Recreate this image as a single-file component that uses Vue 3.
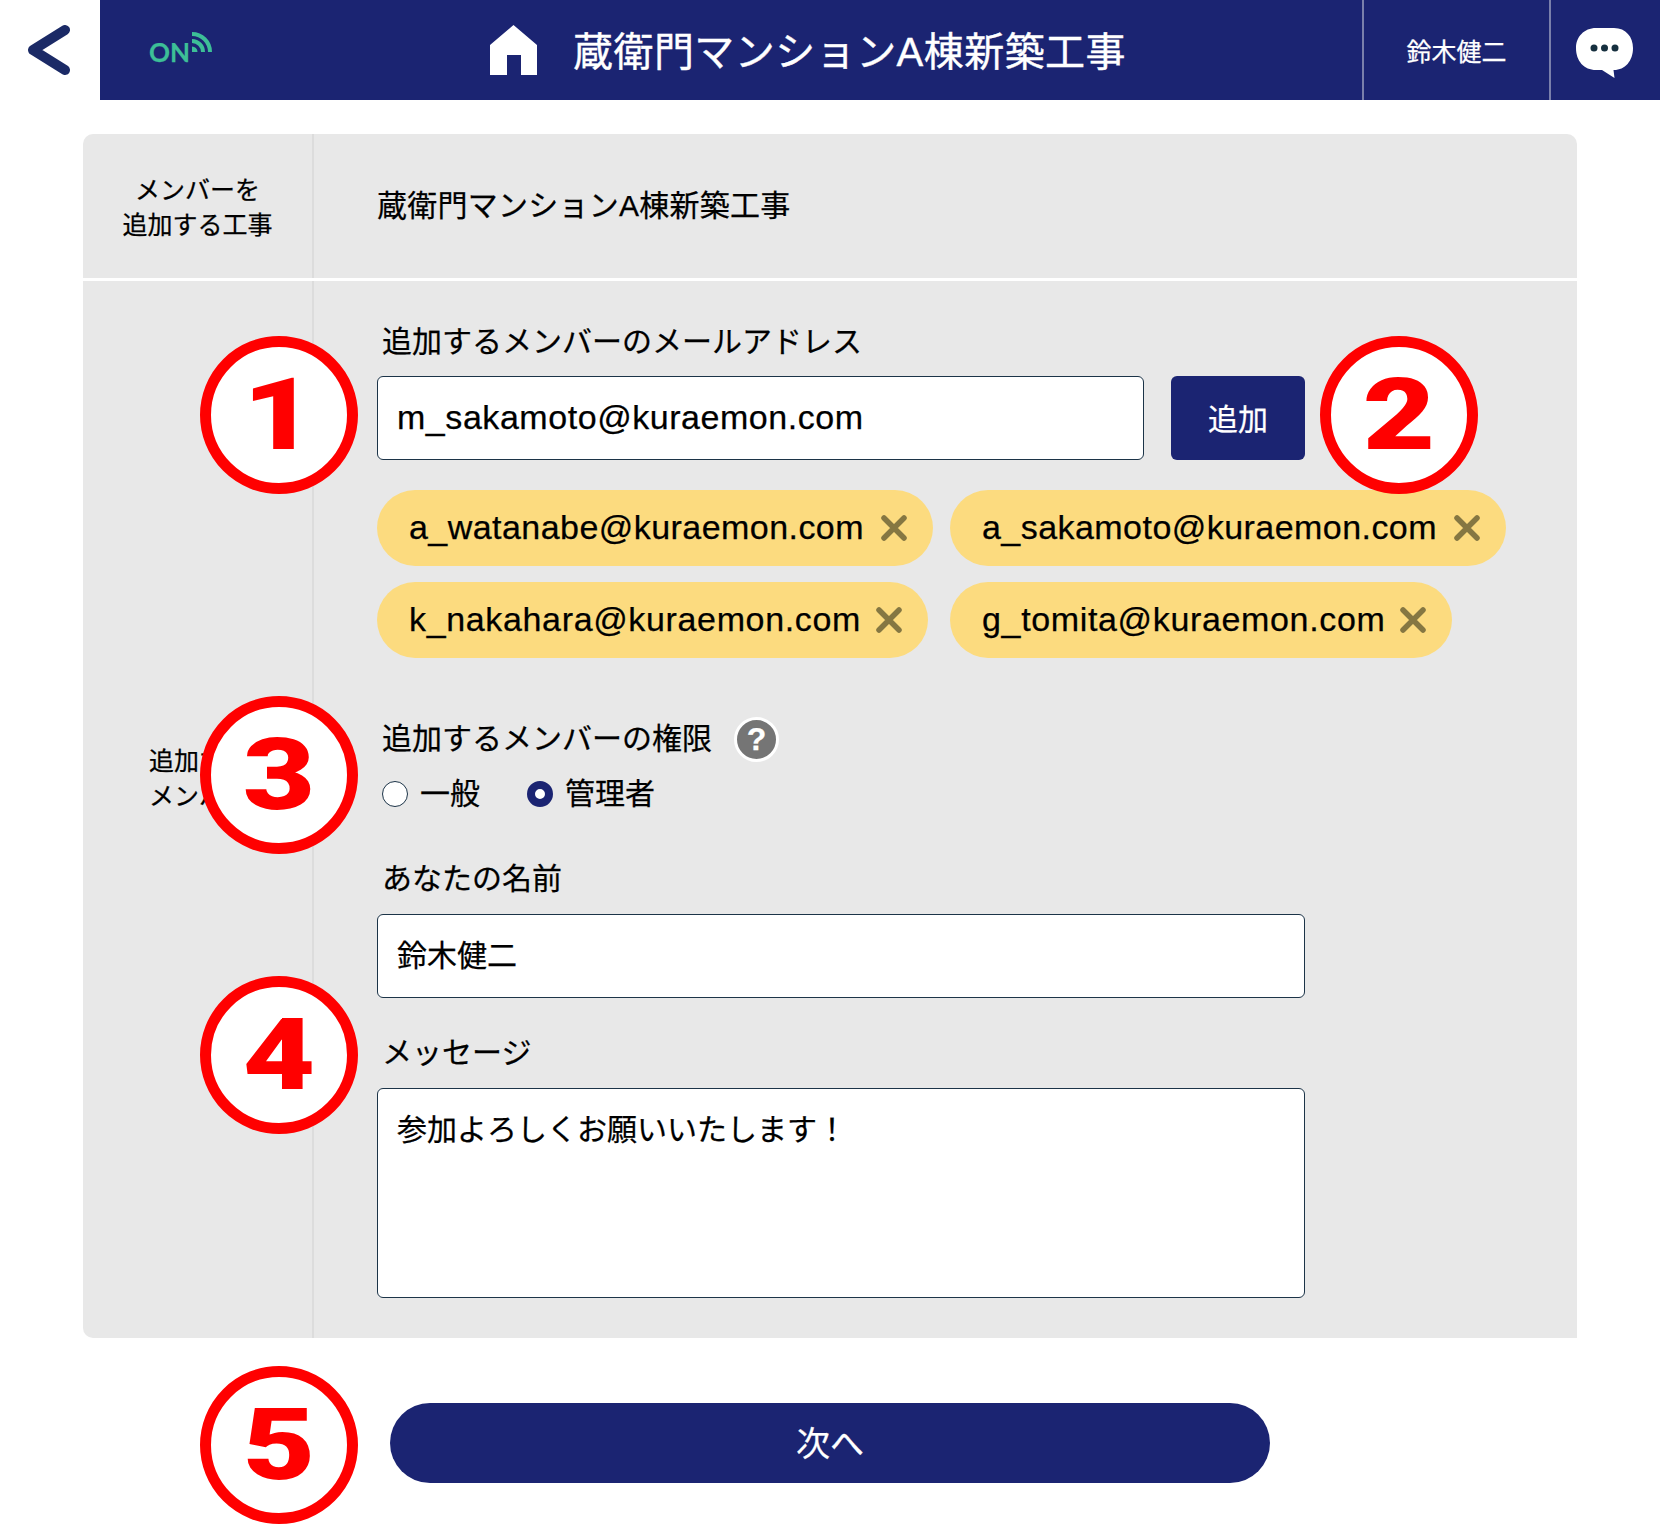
<script setup>
const chips = [
  'a_watanabe@kuraemon.com',
  'a_sakamoto@kuraemon.com',
  'k_nakahara@kuraemon.com',
  'g_tomita@kuraemon.com',
]
const marks = [
  { n: 1, cls: 'm1' },
  { n: 2, cls: 'm2' },
  { n: 3, cls: 'm3' },
  { n: 4, cls: 'm4' },
  { n: 5, cls: 'm5' },
]
</script>

<template>
  <div class="page">
    <header class="top">
      <div class="back">
        <svg width="44" height="50" viewBox="0 0 44 50"><path d="M39 5 L7 25 L39 45" fill="none" stroke="#1b2a66" stroke-width="10" stroke-linecap="round" stroke-linejoin="round"/></svg>
      </div>
      <div class="bar">
        <div class="status">
          <span class="on">ON</span>
          <svg class="wifi" width="20" height="20" viewBox="0 0 20 20" fill="none" stroke="#3dbf97" stroke-width="4">
            <path d="M0 2 A18 18 0 0 1 18 20"/>
            <path d="M0 9 A11 11 0 0 1 11 20"/>
            <path d="M0 14.500 A5.500 5.500 0 0 1 5.500 20 H0 Z" fill="#3dbf97" stroke="none"/>
          </svg>
        </div>
        <svg class="home" width="47" height="50" viewBox="0 0 47 50"><path fill="#fff" d="M23.500 0 L47 20 V50 H31 V30 H17 V50 H0 V20 Z"/></svg>
        <h1 class="title">蔵衛門マンションA棟新築工事</h1>
        <div class="user">鈴木健二</div>
        <div class="chat">
          <svg width="58" height="52" viewBox="0 0 58 52">
            <path fill="#fff" d="M20 0 H38 C50 0 57 9 57 20 C57 33 49 42 38 42 H37.500 L38.500 50 L26 42 H20 C8 42 0 33 0 20 C0 9 8 0 20 0 Z"/>
            <circle cx="18" cy="20" r="3.500" fill="#16303f"/>
            <circle cx="28.500" cy="20" r="3.500" fill="#16303f"/>
            <circle cx="39" cy="20" r="3.500" fill="#16303f"/>
          </svg>
        </div>
      </div>
    </header>

    <main class="card">
      <section class="row row-project">
        <div class="side side-project">メンバーを<br>追加する工事</div>
        <div class="project">蔵衛門マンションA棟新築工事</div>
      </section>
      <section class="row row-form">
        <div class="side side-form">追加する<br>メンバー</div>
        <div class="form">
          <div class="label">追加するメンバーのメールアドレス</div>
          <div class="add-row">
            <input class="field field-mail" value="m_sakamoto@kuraemon.com" readonly>
            <button class="add" type="button">追加</button>
          </div>
          <div class="chips">
            <span v-for="c in chips" :key="c" class="chip">
              {{ c }}
              <svg class="x" width="26" height="26" viewBox="0 0 26 26"><path d="M3 3 L23 23 M23 3 L3 23" stroke="#857742" stroke-width="5.500" stroke-linecap="round"/></svg>
            </span>
          </div>
          <div class="label label-role">
            追加するメンバーの権限
            <span class="help">?</span>
          </div>
          <div class="radios">
            <label class="radio"><span class="dot"></span>一般</label>
            <label class="radio"><span class="dot on-dot"></span>管理者</label>
          </div>
          <div class="label label-name">あなたの名前</div>
          <input class="field field-full" value="鈴木健二" readonly>
          <div class="label label-msg">メッセージ</div>
          <textarea class="field area" readonly>参加よろしくお願いいたします！</textarea>
        </div>
      </section>
    </main>

    <button class="next" type="button">次へ</button>

    <div v-for="m in marks" :key="m.n" class="mark" :class="m.cls"><span class="digit">{{ m.n }}</span></div>
  </div>
</template>

<style>
html, body { margin: 0; background: #fff; }
</style>

<style scoped>
.page {
  position: relative;
  width: 1660px;
  height: 1538px;
  overflow: hidden;
  background: #fff;
  color: #000;
  font-family: "Liberation Sans", "Noto Sans CJK JP", sans-serif;
  -webkit-text-stroke: 0.25px;
}
.top { display: flex; height: 100px; }
.back { width: 100px; display: flex; align-items: center; padding-left: 26px; box-sizing: border-box; }
.bar {
  flex: 1;
  display: flex;
  align-items: center;
  background: #1b2472;
  color: #fff;
  padding-left: 49px;
}
.status { width: 341px; height: 40px; display: flex; align-items: flex-start; }
.on { font-family: Lato, sans-serif; font-weight: 700; font-size: 26px; line-height: 28px; color: #3dbf97; margin-top: 8px; }
.wifi { margin: 2px 0 0 2px; }
.title { margin: 0 0 0 36px; font-size: 40px; font-weight: 400; line-height: 105px; height: 100px; width: 789px; letter-spacing: 0.45px; white-space: nowrap; -webkit-text-stroke: 0.4px #fff; }
.user {
  width: 187px;
  height: 100px;
  box-sizing: border-box;
  border-left: 2px solid #7a80ab;
  font-size: 25px;
  line-height: 104px;
  text-align: center;
}
.chat {
  width: 111px;
  height: 100px;
  box-sizing: border-box;
  border-left: 2px solid #7a80ab;
  padding: 28px 0 0 25px;
}
.card {
  width: 1494px;
  margin: 34px 0 0 83px;
  background: #e8e8e8;
  border-radius: 10px 10px 0 10px;
  overflow: hidden;
}
.row { display: flex; }
.row-project { height: 144px; box-sizing: content-box; border-bottom: 3px solid #fff; }
.side {
  width: 231px;
  box-sizing: border-box;
  border-right: 2px solid #dcdcdc;
  text-align: center;
  font-size: 25px;
  line-height: 35px;
}
.side-project { padding-top: 39px; }
.project { padding: 50px 0 0 63px; font-size: 30px; line-height: 44px; letter-spacing: 0.25px; }
.side-form { padding: 463px 0 0 3px; }
.form { padding: 41px 0 40px 63px; width: 991px; }
.label { padding-left: 5px; font-size: 30px; line-height: 40px; }
.add-row { display: flex; gap: 27px; margin-top: 14px; }
.field {
  display: block;
  box-sizing: border-box;
  height: 84px;
  padding: 0 19px 1px;
  background: #fff;
  border: 1px solid #1c3448;
  border-radius: 6px;
  outline: none;
  font-family: inherit;
  font-size: 34px;
  letter-spacing: 0.55px;
  color: #000;
}
.field-mail { width: 767px; }
.add {
  width: 134px;
  height: 84px;
  background: #1b2472;
  color: #fff;
  border: 0;
  border-radius: 6px;
  padding: 0 0 3px;
  font-family: inherit;
  font-size: 30px;
}
.chips { display: grid; grid-template-columns: max-content max-content; justify-items: start; gap: 16px 17px; margin-top: 30px; }
.chip {
  display: inline-flex;
  align-items: center;
  gap: 17px;
  height: 76px;
  padding: 0 26px 1px 32px;
  box-sizing: border-box;
  border-radius: 38px;
  background: #fcdb7f;
  font-size: 34px;
  letter-spacing: 0.45px;
  white-space: nowrap;
}
.chip:nth-child(n + 3) { letter-spacing: 0.65px; gap: 15px; }
.label-role { display: flex; align-items: center; gap: 22px; margin-top: 57px; }
.help {
  width: 39px;
  height: 39px;
  margin-top: 2px;
  border: 3px solid #fff;
  border-radius: 50%;
  background: #757575;
  color: #fff;
  font-weight: 700;
  font-size: 32px;
  line-height: 39px;
  text-align: center;
}
.radios { display: flex; gap: 47px; margin-top: 12px; padding-left: 5px; height: 40px; }
.radio { display: flex; align-items: center; gap: 12px; font-size: 30px; line-height: 40px; }
.dot {
  width: 26px;
  height: 26px;
  box-sizing: border-box;
  border: 1px solid #1c3448;
  border-radius: 50%;
  background: #fff;
}
.on-dot { border: 8px solid #1b2472; }
.label-name { margin-top: 45px; }
.field-full { width: 928px; margin-top: 15px; font-size: 30px; letter-spacing: 0; padding-bottom: 6px; }
.label-msg { margin-top: 35px; }
.area { width: 928px; height: 210px; margin-top: 15px; padding: 21px 19px; line-height: 40px; font-size: 30px; letter-spacing: 0; resize: none; }
.next {
  display: block;
  width: 880px;
  height: 80px;
  margin: 65px 0 0 390px;
  background: #1b2472;
  color: #fff;
  border: 0;
  border-radius: 40px;
  padding: 0 0 3px;
  font-family: inherit;
  font-size: 34px;
}
.mark {
  position: absolute;
  width: 158px;
  height: 158px;
  box-sizing: border-box;
  border: 11px solid #ff0000;
  border-radius: 50%;
  background: #fff;
  display: flex;
  align-items: center;
  justify-content: center;
}
.digit {
  font-family: Roboto, sans-serif;
  font-weight: 900;
  font-size: 100px;
  line-height: 1;
  color: #ff0000;
  -webkit-text-stroke: 0;
  transform: scaleX(1.25);
}
.m1 { left: 200px; top: 336px; }
.m2 { left: 1320px; top: 336px; }
.m3 { left: 200px; top: 696px; }
.m4 { left: 200px; top: 976px; }
.m5 { left: 200px; top: 1366px; }
</style>
